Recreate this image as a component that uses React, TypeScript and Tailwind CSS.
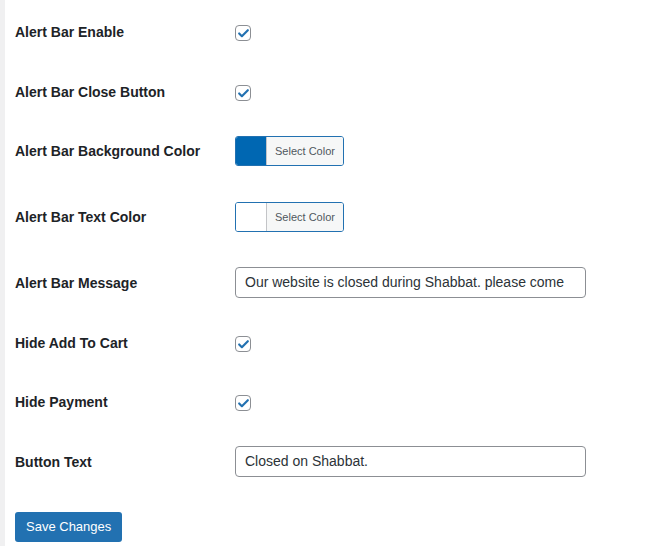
import { Check } from "lucide-react";

type Row =
  | { label: string; kind: "check"; h: string }
  | { label: string; kind: "color"; color?: string; h: string }
  | { label: string; kind: "text"; value: string; h: string };

const rows: Row[] = [
  { label: "Alert Bar Enable", kind: "check", h: "h-[60px]" },
  { label: "Alert Bar Close Button", kind: "check", h: "h-[59px]" },
  { label: "Alert Bar Background Color", kind: "color", color: "#0067b2", h: "h-[66px]" },
  { label: "Alert Bar Text Color", kind: "color", h: "h-[66px]" },
  {
    label: "Alert Bar Message",
    kind: "text",
    value: "Our website is closed during Shabbat. please come",
    h: "h-[60px]",
  },
  { label: "Hide Add To Cart", kind: "check", h: "h-[59px]" },
  { label: "Hide Payment", kind: "check", h: "h-[60px]" },
  { label: "Button Text", kind: "text", value: "Closed on Shabbat.", h: "h-[61px]" },
];

function Checkbox() {
  return (
    <div className="mt-[22px] flex h-4 w-4 items-center justify-center rounded-[4px] border border-[#8c8f94] bg-white">
      <Check size={13} strokeWidth={4} className="text-[#2271b1]" />
    </div>
  );
}

function ColorPicker({ color }: { color?: string }) {
  return (
    <div className="mt-[14px] flex h-[30px] w-[109px] overflow-hidden rounded-[3px] border border-[#2271b1]">
      <div className="w-[30px]" style={{ backgroundColor: color ?? "#ffffff" }} />
      <div className="flex flex-1 items-center justify-center border-l border-[#c3c4c7] bg-[#f6f7f7] text-[11px] text-[#50575e]">
        Select Color
      </div>
    </div>
  );
}

function TextField({ value }: { value: string }) {
  return (
    <div className="mt-[13px] flex h-[31px] w-[351px] items-center overflow-hidden whitespace-nowrap rounded-[4px] border border-[#8c8f94] bg-white px-[9px] text-[14px] text-[#2c3338]">
      {value}
    </div>
  );
}

export default function App() {
  return (
    <div className="flex min-h-screen bg-white font-['Liberation_Sans',Arial,sans-serif] text-[#1d2327]">
      <div className="w-[5px] shrink-0 bg-[#f0f0f1]" />
      <div className="flex-1 pl-[10px] pt-[3px]">
        {rows.map((row) => (
          <div key={row.label} className={`flex ${row.h}`}>
            <div className="w-[220px] shrink-0 pt-5 text-[14px] font-semibold leading-[18px]">
              {row.label}
            </div>
            <div>
              {row.kind === "check" && <Checkbox />}
              {row.kind === "color" && <ColorPicker color={row.color} />}
              {row.kind === "text" && <TextField value={row.value} />}
            </div>
          </div>
        ))}
        <div className="pt-[18px]">
          <button className="h-[30px] rounded-[3px] bg-[#2271b1] px-[11px] text-[13px] text-white">
            Save Changes
          </button>
        </div>
      </div>
    </div>
  );
}
